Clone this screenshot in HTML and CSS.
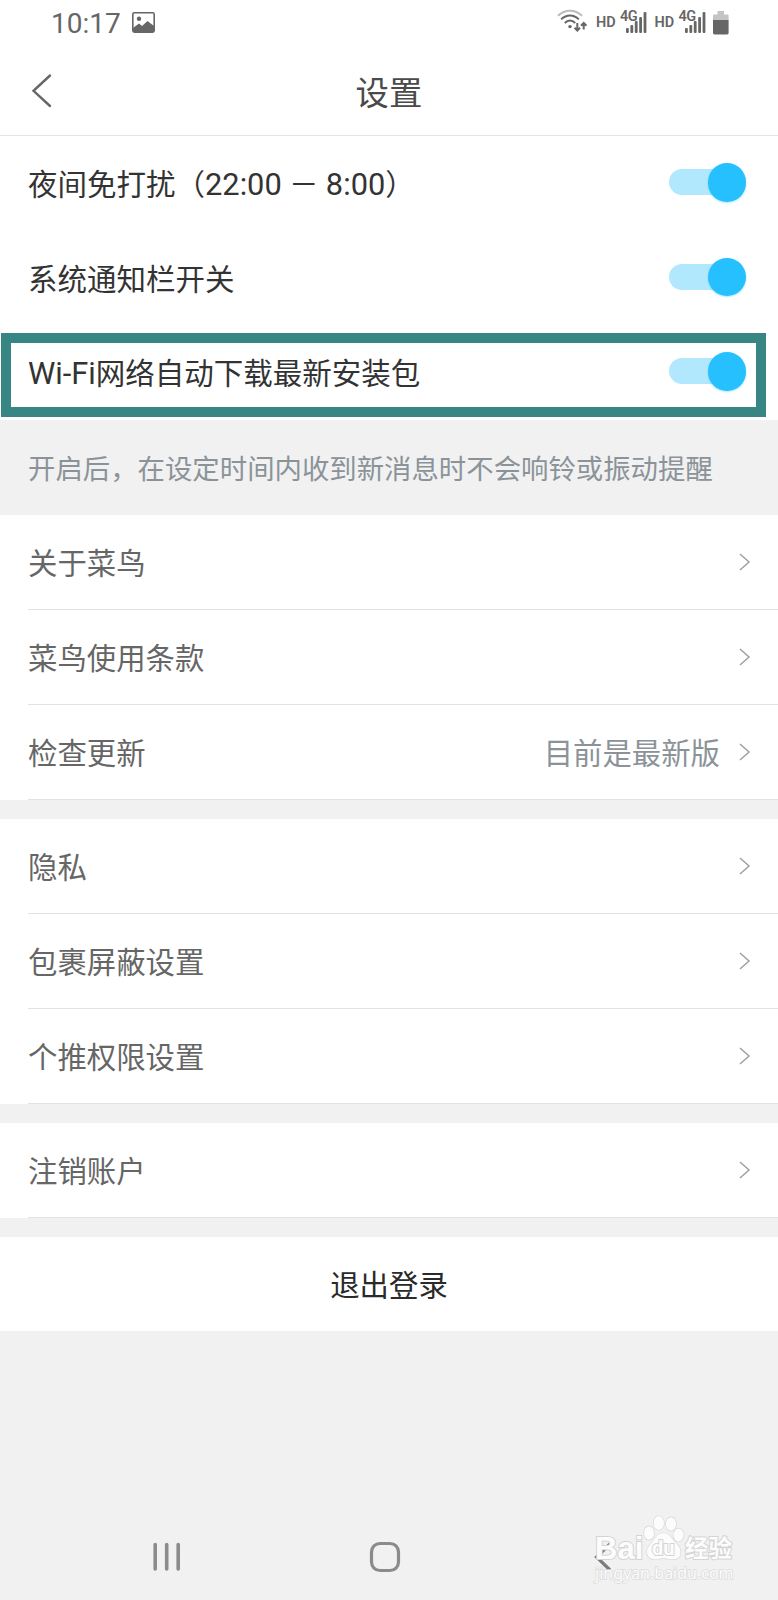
FILE: index.html
```
<!DOCTYPE html>
<html lang="zh-CN">
  <head>
    <meta charset="UTF-8" />
    <meta name="viewport" content="width=device-width, initial-scale=1.0" />
    <title>设置</title>
    <link rel="stylesheet" href="styles.css">
  </head>

  <body>
    <div class="screen">
      <div class="status-bar">
        <div class="status-left">
          <span class="clock">10:17</span>
          <svg class="photo-icon" width="23" height="21" viewBox="0 0 23 21">
            <rect x="0.8" y="0.8" width="21.4" height="19.4" rx="1.6" fill="none" stroke="#666" stroke-width="1.6" />
            <circle cx="7" cy="6.7" r="2.2" fill="#666" />
            <path d="M1 16L7 11.5L10 14L15.5 9L22 14V20H1Z" fill="#666" />
          </svg>
        </div>
        <div class="status-right">
          <svg class="wifi-icon" width="31" height="24" viewBox="0 0 31 24" fill="none" stroke-width="2">
            <path d="M1 6.8C8 0.2 18 0.2 25 6.8" stroke="#bbb" />
            <path d="M4.2 10.4C9.5 5.2 16.5 5.2 21.8 10.4" stroke="#666" />
            <path d="M7.8 14C11 10.8 15 10.8 18.2 14" stroke="#666" />
            <circle cx="13" cy="17.6" r="1.7" fill="#666" />
            <path d="M20.3 14V21.5M17.6 18.8L20.3 21.5L23 18.8M26.7 20.5V14M24 16.7L26.7 14L29.4 16.7" stroke="#666" />
          </svg>
          <span class="hd">HD</span>
          <div class="signal">
            <svg width="21" height="21" viewBox="0 0 21 21" fill="#666">
              <rect x="0" y="16" width="2.8" height="5" rx="1" />
              <rect x="4.4" y="13" width="2.8" height="8" rx="1" />
              <rect x="8.8" y="9" width="2.8" height="12" rx="1" />
              <rect x="13.2" y="5" width="2.8" height="16" rx="1" />
              <rect x="17.6" y="0" width="2.8" height="21" rx="1" />
            </svg>
            <span class="net">4G</span>
          </div>
          <span class="hd">HD</span>
          <div class="signal">
            <svg width="21" height="21" viewBox="0 0 21 21" fill="#666">
              <rect x="0" y="16" width="2.8" height="5" rx="1" />
              <rect x="4.4" y="13" width="2.8" height="8" rx="1" />
              <rect x="8.8" y="9" width="2.8" height="12" rx="1" />
              <rect x="13.2" y="5" width="2.8" height="16" rx="1" />
              <rect x="17.6" y="0" width="2.8" height="21" rx="1" />
            </svg>
            <span class="net">4G</span>
          </div>
          <svg class="battery-icon" width="16" height="24" viewBox="0 0 16 24">
            <path d="M4.5 0H11V3.5H14.5Q15.6 3.5 15.6 4.6V9H0V4.6Q0 3.5 1 3.5H4.5Z" fill="#c4c4c4" />
            <path d="M0 9H15.6V22Q15.6 23.4 14.2 23.4H1.4Q0 23.4 0 22Z" fill="#666" />
          </svg>
        </div>
      </div>

      <div class="header">
        <svg class="back" width="22" height="36" viewBox="0 0 22 36">
          <path d="M19 2.5L2.5 17.8L19 33" fill="none" stroke="#666" stroke-width="2.4" stroke-linecap="round" />
        </svg>
        <h1>设置</h1>
      </div>

      <div class="switch-list">
        <div class="switch-row">
          <span class="name">夜间免打扰（<span class="latin">22:00</span> － <span class="latin">8:00</span>）</span>
          <div class="switch"><div class="knob"></div></div>
        </div>
        <div class="switch-row">
          <span class="name">系统通知栏开关</span>
          <div class="switch"><div class="knob"></div></div>
        </div>
        <div class="switch-row">
          <span class="name"><span class="latin">Wi-Fi</span>网络自动下载最新安装包</span>
          <div class="switch"><div class="knob"></div></div>
          <div class="highlight"></div>
        </div>
      </div>

      <p class="hint">开启后，在设定时间内收到新消息时不会响铃或振动提醒</p>

      <div class="group">
        <div class="row">
          <span class="label">关于菜鸟</span>
          <svg class="arrow" viewBox="0 0 12 18"><path d="M1 1L10 9L1 17" /></svg>
        </div>
        <div class="row">
          <span class="label">菜鸟使用条款</span>
          <svg class="arrow" viewBox="0 0 12 18"><path d="M1 1L10 9L1 17" /></svg>
        </div>
        <div class="row">
          <span class="label">检查更新</span>
          <span class="value">目前是最新版</span>
          <svg class="arrow" viewBox="0 0 12 18"><path d="M1 1L10 9L1 17" /></svg>
        </div>
      </div>

      <div class="group">
        <div class="row">
          <span class="label">隐私</span>
          <svg class="arrow" viewBox="0 0 12 18"><path d="M1 1L10 9L1 17" /></svg>
        </div>
        <div class="row">
          <span class="label">包裹屏蔽设置</span>
          <svg class="arrow" viewBox="0 0 12 18"><path d="M1 1L10 9L1 17" /></svg>
        </div>
        <div class="row">
          <span class="label">个推权限设置</span>
          <svg class="arrow" viewBox="0 0 12 18"><path d="M1 1L10 9L1 17" /></svg>
        </div>
      </div>

      <div class="group">
        <div class="row">
          <span class="label">注销账户</span>
          <svg class="arrow" viewBox="0 0 12 18"><path d="M1 1L10 9L1 17" /></svg>
        </div>
      </div>

      <div class="logout">退出登录</div>

      <div class="nav-bar">
        <svg width="28" height="30" viewBox="0 0 28 30" stroke="#8b8b8b" stroke-width="3.6" stroke-linecap="round">
          <path d="M2.2 2.5V27M13.7 2.5V27M25.2 2.5V27" />
        </svg>
        <svg class="home" width="32" height="32" viewBox="0 0 32 32">
          <rect x="2.5" y="2.5" width="27" height="27" rx="8.5" fill="none" stroke="#8b8b8b" stroke-width="3.2" />
        </svg>
        <svg width="18" height="30" viewBox="0 0 18 30">
          <path d="M16 2L2.5 15L16 28" fill="none" stroke="#7c7c7c" stroke-width="3.2" />
        </svg>
      </div>

      <div class="watermark">
        <div class="brand">
          <span class="bai">Bai</span>
          <div class="paw">
            <svg width="42" height="47" viewBox="0 0 42 47" fill="#fcfcfc" stroke="#d4d4d4" stroke-width="1.2">
              <ellipse cx="6" cy="18" rx="5" ry="6.8" />
              <ellipse cx="15.8" cy="8" rx="5.2" ry="7" />
              <ellipse cx="28" cy="9" rx="5.2" ry="6.8" />
              <ellipse cx="35.5" cy="20" rx="5.2" ry="6.5" />
              <path d="M20.5 18C26 18 28 22 31 26C35 30 38 33 37.5 38C37 44 32 45 27 44C22 43 19 43 14 44C9 45 4 43 4 37C4 32 8 29 11 25C13.5 21 16 18 20.5 18Z" />
            </svg>
            <span class="du">du</span>
          </div>
          <span class="jingyan">经验</span>
        </div>
        <div class="site">jingyan.baidu.com</div>
      </div>
    </div>
  </body>
</html>
```
FILE: styles.css
```
body {
  margin: 0;
  background-color: #f1f1f1;
  font-family: Roboto, "Noto Sans CJK SC", sans-serif;
}

.screen {
  position: relative;
  display: flex;
  flex-direction: column;
  width: 778px;
  height: 1600px;
  overflow: hidden;
  background-color: #f1f1f1;
}

/* status bar */
.status-bar {
  display: flex;
  justify-content: space-between;
  box-sizing: border-box;
  height: 46px;
  padding: 0 49px 0 51px;
  background-color: #fff;
  color: #666;
}

.status-left,
.status-right {
  display: flex;
}

.clock {
  font-size: 28px;
  line-height: 47px;
}

.photo-icon {
  margin: 12px 0 0 11px;
}

.wifi-icon {
  margin: 9px 8px 0 0;
}

.hd {
  width: 20px;
  font-size: 14.5px;
  font-weight: 600;
  line-height: 45px;
}

.signal {
  position: relative;
  width: 26px;
  padding: 12px 7.5px 0 5px;
  text-align: right;
}

.net {
  position: absolute;
  top: 10px;
  left: 4px;
  font-size: 14.5px;
  font-weight: 600;
  line-height: 13px;
  letter-spacing: -0.5px;
}

.battery-icon {
  margin: 11px 0 0;
}

/* title bar */
.header {
  position: relative;
  display: flex;
  align-items: center;
  justify-content: center;
  box-sizing: border-box;
  height: 90px;
  border-bottom: 1px solid #e4e4e4;
  background-color: #fff;
}

.back {
  position: absolute;
  top: 27px;
  left: 31px;
}

h1 {
  margin: 0;
  color: #4a4a4a;
  font-size: 33.4px;
  font-weight: 400;
}

/* switches */
.switch-list {
  background-color: #fff;
}

.switch-row {
  position: relative;
  display: flex;
  align-items: center;
  justify-content: space-between;
  height: 94.5px;
  padding: 0 32px 0 28px;
  color: #333;
  font-size: 29.5px;
}

.name {
  margin-bottom: 2px;
}

.latin {
  font-size: 30.8px;
}

.switch {
  display: flex;
  align-items: center;
  justify-content: flex-end;
  width: 77px;
  height: 26px;
  margin-bottom: 2px;
  border-radius: 13px;
  background-color: #b2e8fd;
}

.knob {
  width: 38.5px;
  height: 38.5px;
  border-radius: 50%;
  background-color: #26c0ff;
  box-shadow: 0 1px 2px rgba(38, 192, 255, 0.4);
}

.highlight {
  position: absolute;
  top: 8px;
  left: 1px;
  box-sizing: border-box;
  width: 765px;
  height: 84px;
  border: 10px solid #388683;
}

.hint {
  height: 95.5px;
  margin: 0;
  padding-left: 28px;
  color: #8b9399;
  font-size: 27.4px;
  line-height: 100px;
}

/* list rows */
.group {
  margin-bottom: 19px;
  background-color: #fff;
}

.row {
  display: flex;
  align-items: center;
  box-sizing: border-box;
  height: 95px;
  margin-left: 28px;
  padding-right: 27px;
  border-bottom: 1px solid #e2e2e2;
  font-size: 29.4px;
}

.label {
  flex: 1;
  margin-bottom: 3px;
  color: #666;
}

.value {
  margin: 0 19px 3px 0;
  color: #8b9399;
}

.arrow {
  width: 12px;
  height: 18px;
  margin-bottom: 1px;
  fill: none;
  stroke: #a0a0a0;
  stroke-width: 1.5;
}

.logout {
  height: 94px;
  background-color: #fff;
  color: #2a2a2a;
  font-size: 29.4px;
  line-height: 98px;
  text-align: center;
}

.nav-bar {
  display: flex;
  align-items: center;
  justify-content: space-between;
  height: 86px;
  margin-top: auto;
  padding: 0 166px 0 153px;
}

.home {
  margin-right: 5px;
}

/* logo over the bottom corner */
.watermark {
  position: absolute;
  top: 1514px;
  left: 595px;
  width: 150px;
  color: #fcfcfc;
  -webkit-text-stroke: 2px #d4d4d4;
  paint-order: stroke fill;
}

.brand {
  display: flex;
  align-items: flex-end;
  height: 48px;
}

.bai {
  width: 48px;
  font-family: "Liberation Sans", sans-serif;
  font-size: 31px;
  font-weight: 700;
  line-height: 26px;
}

.paw {
  position: relative;
  width: 42px;
  height: 47px;
}

.du {
  position: absolute;
  top: 22px;
  left: 9px;
  font-size: 20px;
  font-weight: 700;
  line-height: 22px;
}

.jingyan {
  font-size: 23.5px;
  font-weight: 700;
  line-height: 26px;
}

.site {
  font-family: "Noto Sans", sans-serif;
  font-size: 16px;
  line-height: 22px;
  -webkit-text-stroke: 1.5px #dadada;
}
```
